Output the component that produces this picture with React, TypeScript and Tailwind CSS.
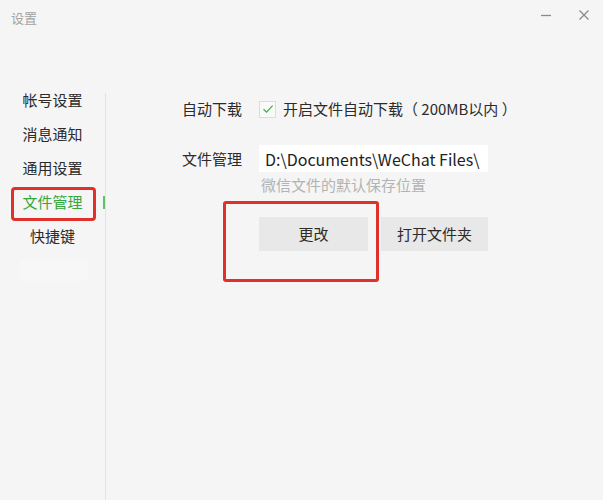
import React from 'react';

const font = { fontFamily: '"Noto Sans CJK SC", "Noto Sans", sans-serif' };

const navItems = ['帐号设置', '消息通知', '通用设置', '文件管理', '快捷键'];

export default function App() {
  const active = '文件管理';

  return (
    <div
      className="w-[603px] h-[500px] bg-[#f5f5f5] flex flex-col text-[#333] overflow-hidden"
      style={font}
    >
      {/* Title bar */}
      <div className="h-[83px] flex items-start justify-between">
        <div className="pl-[11px] pt-[9px] text-[13px] leading-[18px] text-[#a3a3a3]">设置</div>
        <div className="flex items-start pt-[9px] pr-[13px] gap-[26px]">
          <svg width="12" height="12" viewBox="0 0 12 12" className="mt-[1px]">
            <line x1="1" y1="5.5" x2="11" y2="5.5" stroke="#8a8a8a" strokeWidth="1.3" />
          </svg>
          <svg width="12" height="12" viewBox="0 0 12 12">
            <path d="M1.5 1.5 L10.5 10.5 M10.5 1.5 L1.5 10.5" stroke="#8a8a8a" strokeWidth="1.3" />
          </svg>
        </div>
      </div>

      <div className="flex flex-1">
        {/* Sidebar */}
        <div className="w-[105px] flex flex-col">
          {navItems.map((item) => {
            const isActive = item === active;
            return (
              <div key={item} className="relative h-[34px] flex items-center justify-center">
                <span
                  className={`text-[15px] leading-[20px] ${isActive ? 'text-[#34a63c]' : 'text-[#2b2b2b]'}`}
                >
                  {item}
                </span>
                {isActive && (
                  <>
                    <span className="absolute left-[11px] top-[2px] w-[85px] h-[34px] border-[3px] border-[#e0302a] rounded-[4px]" />
                    <span className="absolute right-0 top-[11px] w-[2px] h-[13px] bg-[#5cc16a]" />
                  </>
                )}
              </div>
            );
          })}
          <div className="ml-[20px] mt-[6px] w-[68px] h-[22px] rounded-[4px] bg-[#f7f7f7]" />
        </div>

        <div className="w-px bg-[#e3e3e3] mt-[10px]" />

        {/* Content */}
        <div className="flex-1 pl-[76px] pt-[16px] flex flex-col">
          <div className="flex items-center h-[20px]">
            <span className="w-[77px] text-[15px] leading-[20px] text-[#2b2b2b]">自动下载</span>
            <span className="w-[17px] h-[17px] border border-[#dcdcdc] bg-[#fafafa] flex items-center justify-center">
              <svg width="12" height="12" viewBox="0 0 12 12">
                <path d="M1.5 6.2 L4.6 9.2 L10.6 2.6" fill="none" stroke="#3cb043" strokeWidth="1.2" />
              </svg>
            </span>
            <span className="ml-[7px] text-[15px] leading-[20px] text-[#2b2b2b] whitespace-pre [text-spacing-trim:space-all]">
              开启文件自动下载（ 200MB以内 ）
            </span>
          </div>

          <div className="flex items-center mt-[26px]">
            <span className="w-[77px] text-[15px] leading-[20px] text-[#2b2b2b]">文件管理</span>
            <div className="w-[229px] h-[27px] bg-white flex items-center pl-[6px] text-[16px] text-[#222] whitespace-nowrap overflow-hidden">
              D:\Documents\WeChat Files\
            </div>
          </div>
          <div className="ml-[79px] mt-[3px] text-[15px] leading-[20px] text-[#b3b3b3]">微信文件的默认保存位置</div>

          <div className="flex ml-[77px] mt-[22px] gap-[13px]">
            <div className="relative">
              <button className="w-[109px] h-[34px] bg-[#e8e8e8] text-[15px] text-[#2b2b2b]">更改</button>
              <span className="absolute left-[-36px] top-[-16px] w-[156px] h-[81px] border-[3px] border-[#e0302a] rounded-[3px]" />
            </div>
            <button className="w-[107px] h-[34px] bg-[#e8e8e8] text-[15px] text-[#2b2b2b]">打开文件夹</button>
          </div>
        </div>
      </div>
    </div>
  );
}
